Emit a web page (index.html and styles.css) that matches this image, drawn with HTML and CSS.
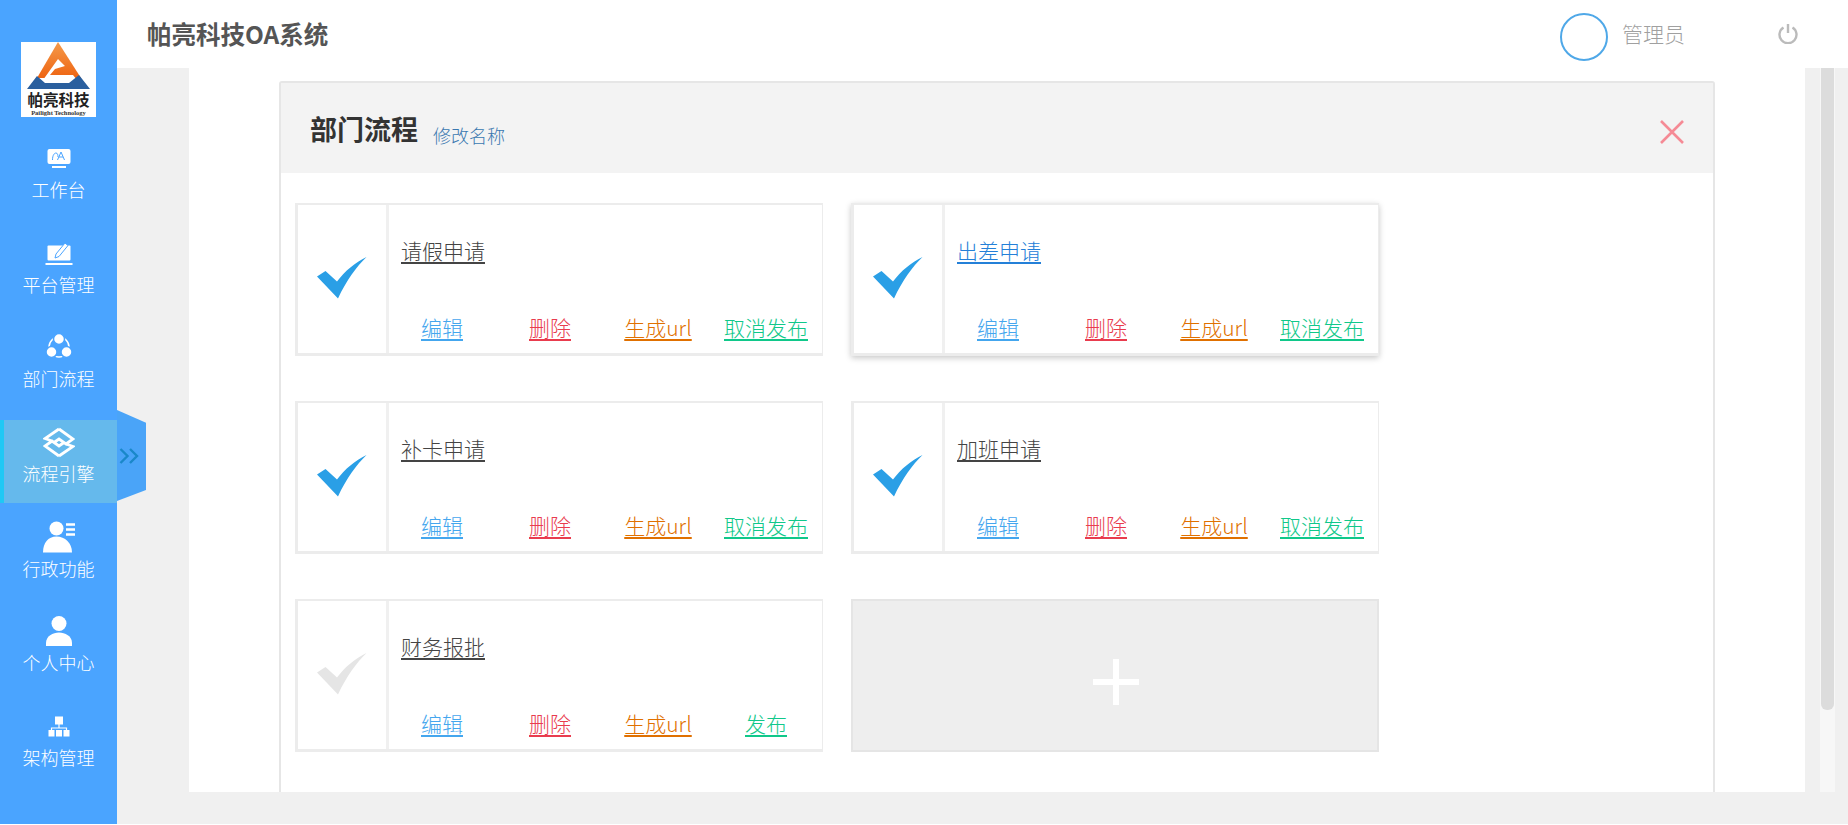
FILE: index.html
```html
<!DOCTYPE html>
<html lang="zh-CN">
<head>
  <meta charset="UTF-8">
  <title>帕亮科技OA系统</title>
  <link rel="stylesheet" href="styles.css">
</head>
<body>
  <svg class="svgDefs" xmlns="http://www.w3.org/2000/svg">
    <defs>
      <symbol id="tick" viewBox="0 0 50 42">
        <path d="M0 19.5 8.5 14 20 24.5C28 14 38 5.5 49.5 0 40 9 29 24 21 41.5Z"/>
      </symbol>
      <linearGradient id="logoOrange" x1="0" y1="0" x2="0" y2="1">
        <stop offset="0" stop-color="#f59a4a"/>
        <stop offset="1" stop-color="#ee6412"/>
      </linearGradient>
    </defs>
  </svg>

  <div class="app">
    <aside class="side">
      <div class="logo">
        <svg class="logoMark" viewBox="0 0 75 48">
          <path fill="url(#logoOrange)" d="M37 0 60 36H16Z"/>
          <path fill="#fff" d="M22 38 37 17 44 24 34 27 29 33H52L56 38Z"/>
          <path fill="#2a5f9e" d="M6 47 16 34 24 41H48L58 33 69 47Z"/>
        </svg>
        <div class="logoName">帕亮科技</div>
        <div class="logoSub">Pailight Technology</div>
      </div>
      <nav class="nav">
        <a class="navItem">
          <svg class="navIcon" viewBox="0 0 32 32">
            <rect x="4.5" y="7" width="23" height="15" rx="2" fill="#fff"/>
            <rect x="9" y="24" width="14" height="2" fill="#fff"/>
            <path d="M9.5 18c0-5 2-7 3.500-7s2 2 2 4M14.500 18 18 10l3.500 8M16 15h4" fill="none" stroke="#4aa4ff" stroke-width="1"/>
          </svg>
          <span>工作台</span>
        </a>
        <a class="navItem">
          <svg class="navIcon" viewBox="0 0 32 32">
            <rect x="4.500" y="8.500" width="23" height="15" rx="1" fill="#fff"/>
            <rect x="2.500" y="26" width="27" height="2" fill="#fff"/>
            <path d="M12 21l1-4 9-11 3 2.500-9 11z" fill="#fff" stroke="#4aa4ff" stroke-width="1"/>
          </svg>
          <span>平台管理</span>
        </a>
        <a class="navItem">
          <svg class="navIcon" viewBox="0 0 32 32">
            <circle cx="16" cy="16" r="10" fill="none" stroke="#fff" stroke-width="1.500"/>
            <g fill="#fff" stroke="#4aa4ff" stroke-width="1.500">
              <circle cx="16" cy="8" r="5.500"/>
              <circle cx="8.500" cy="21" r="5.500"/>
              <circle cx="23.500" cy="21" r="5.500"/>
            </g>
          </svg>
          <span>部门流程</span>
        </a>
        <a class="navItem isActive">
          <svg class="navIcon" viewBox="0 0 32 32">
            <path d="M16 3 30 13 23 18 16 13 11 16.500M16 30 2 20 9 15 16 20 21 16.500M9 15 2 12.500 16 3M23 18 30 20.500 16 30" fill="none" stroke="#fff" stroke-width="2.800"/>
          </svg>
          <span>流程引擎</span>
        </a>
        <a class="navItem">
          <svg class="navIcon" viewBox="0 0 32 32">
            <circle cx="13.500" cy="7.500" r="7" fill="#fff"/>
            <path d="M0 31.500C0 22 5 15.500 13.500 15.500S29 22 29 31.500Z" fill="#fff"/>
            <path d="M23 3.500h9M23 8.500h9M23 13.500h9" stroke="#fff" stroke-width="2.500"/>
          </svg>
          <span>行政功能</span>
        </a>
        <a class="navItem">
          <svg class="navIcon" viewBox="0 0 32 32">
            <circle cx="16" cy="8.500" r="7.500" fill="#fff"/>
            <path d="M3 31v-3C3 21 10 17.500 16 17.500S29 21 29 28v3Z" fill="#fff"/>
          </svg>
          <span>个人中心</span>
        </a>
        <a class="navItem">
          <svg class="navIcon" viewBox="0 0 32 32">
            <rect x="12" y="6.500" width="8" height="8" fill="#fff"/>
            <path d="M16 14v4M8.500 20v-2h15v2" fill="none" stroke="#fff" stroke-width="1.200"/>
            <rect x="5.500" y="20" width="6" height="6.500" fill="#fff"/>
            <rect x="13" y="20" width="6" height="6.500" fill="#fff"/>
            <rect x="20.500" y="20" width="6" height="6.500" fill="#fff"/>
          </svg>
          <span>架构管理</span>
        </a>
      </nav>
      <div class="sideTab">
        <svg class="sideTabArrows" viewBox="0 0 20 16">
          <path d="M1.500 1 8.500 8 1.500 15M11 1 18 8 11 15" fill="none" stroke="#1a88c9" stroke-width="2.400"/>
        </svg>
      </div>
    </aside>

    <div class="main">
      <header class="topBar">
        <div class="sysTitle">帕亮科技OA系统</div>
        <div class="userBox">
          <div class="avatar"></div>
          <div class="userName">管理员</div>
          <svg class="powerIcon" viewBox="0 0 20 21">
            <path d="M5.500 4.500a8.500 8.500 0 1 0 9 0M10 1v9" fill="none" stroke="#bbb" stroke-width="2.400"/>
          </svg>
        </div>
      </header>

      <div class="pageBody">
        <div class="content">
          <section class="panel">
            <div class="panelHead">
              <h2 class="panelTitle">部门流程</h2>
              <a class="renameLink">修改名称</a>
              <svg class="closeIcon" viewBox="0 0 24 24">
                <path d="M1 1 23 23M23 1 1 23" stroke="#f58a95" stroke-width="2.600"/>
              </svg>
            </div>
            <div class="flowGrid">
              <div class="flowCard">
                <div class="flowState"><svg class="tick"><use href="#tick"/></svg></div>
                <div class="flowMain">
                  <a class="flowName">请假申请</a>
                  <div class="flowActions">
                    <a class="actEdit">编辑</a><a class="actDel">删除</a><a class="actUrl">生成url</a><a class="actPub">取消发布</a>
                  </div>
                </div>
              </div>
              <div class="flowCard isHover">
                <div class="flowState"><svg class="tick"><use href="#tick"/></svg></div>
                <div class="flowMain">
                  <a class="flowName">出差申请</a>
                  <div class="flowActions">
                    <a class="actEdit">编辑</a><a class="actDel">删除</a><a class="actUrl">生成url</a><a class="actPub">取消发布</a>
                  </div>
                </div>
              </div>
              <div class="flowCard">
                <div class="flowState"><svg class="tick"><use href="#tick"/></svg></div>
                <div class="flowMain">
                  <a class="flowName">补卡申请</a>
                  <div class="flowActions">
                    <a class="actEdit">编辑</a><a class="actDel">删除</a><a class="actUrl">生成url</a><a class="actPub">取消发布</a>
                  </div>
                </div>
              </div>
              <div class="flowCard">
                <div class="flowState"><svg class="tick"><use href="#tick"/></svg></div>
                <div class="flowMain">
                  <a class="flowName">加班申请</a>
                  <div class="flowActions">
                    <a class="actEdit">编辑</a><a class="actDel">删除</a><a class="actUrl">生成url</a><a class="actPub">取消发布</a>
                  </div>
                </div>
              </div>
              <div class="flowCard">
                <div class="flowState"><svg class="tick isOff"><use href="#tick"/></svg></div>
                <div class="flowMain">
                  <a class="flowName">财务报批</a>
                  <div class="flowActions">
                    <a class="actEdit">编辑</a><a class="actDel">删除</a><a class="actUrl">生成url</a><a class="actPub">发布</a>
                  </div>
                </div>
              </div>
              <div class="addCard"></div>
            </div>
          </section>
        </div>
        <div class="scrollTrack"><div class="scrollThumb"></div></div>
      </div>
    </div>
  </div>
</body>
</html>
```

FILE: styles.css
```css
html, body{margin: 0; height: 100%; overflow: hidden; background: #fff;}
body{font-family: "Noto Sans CJK SC", "Open Sans", sans-serif; color: #444;}
a{cursor: pointer;}
.svgDefs{position: absolute; width: 0; height: 0;}

.app{display: flex; height: 824px;}

/* sidebar */
.side{position: relative; z-index: 2; flex: none; width: 117px; padding-top: 42px; box-sizing: border-box; background: #4aa4ff;}
.logo{width: 75px; height: 75px; margin: 0 auto; background: #fff; text-align: center; overflow: hidden;}
.logoMark{display: block; width: 75px; height: 48px;}
.logoName{font-size: 15.5px; line-height: 19px; font-weight: 700; color: #222;}
.logoSub{font-family: "Liberation Serif", serif; font-size: 6.5px; line-height: 8px; font-weight: 700; color: #333; white-space: nowrap;}

.nav{display: flex; flex-direction: column; gap: 11.67px; margin-top: 19px;}
.navItem{display: flex; flex-direction: column; align-items: center; height: 83px; padding-top: 6px; box-sizing: border-box; color: #fff; font-size: 18px; line-height: 24px; font-weight: 300;}
.navIcon{flex: none; width: 32px; height: 32px; margin-bottom: 3px;}
.navItem.isActive{background: #65b9ec; box-shadow: inset 4px 0 0 #1fc8f5;}

.sideTab{position: absolute; left: 117px; top: 410px; width: 29px; height: 91px; background: #4aa4f8; clip-path: polygon(0 0, 100% 14%, 100% 88%, 0 100%);}
.sideTabArrows{position: absolute; left: 2px; top: 38px; width: 20px; height: 16px;}

/* top bar */
.main{flex: 1; min-width: 0; display: flex; flex-direction: column;}
.topBar{flex: none; height: 68px; display: flex; align-items: center; justify-content: space-between; padding: 0 50px 0 30px; background: #fff;}
.sysTitle{font-size: 24.5px; font-weight: 700; color: #555; line-height: 34px;}
.userBox{display: flex; align-items: center;}
.avatar{width: 44px; height: 44px; border: 2px solid #4fa8e8; border-radius: 50%; margin: 6px 0 0 2px;}
.userName{margin-left: 14px; font-size: 21px; line-height: 30px; font-weight: 300; color: #a0a0a0; margin-top: -2px;}
.powerIcon{width: 20px; height: 21px; margin-left: 93px; margin-top: -1px;}

/* page */
.pageBody{position: relative; flex: 1; min-height: 0; display: flex; padding: 0 43px 32px 72px; background: #f0f0f0;}
.content{flex: 1; min-width: 0; padding: 13px 0 0 90px; background: #fff; overflow: hidden;}
.panel{width: 1436px; box-sizing: border-box; height: 900px; border: 2px solid #e6e6e6; border-radius: 3px;}
.panelHead{display: flex; align-items: flex-end; height: 90px; box-sizing: border-box; padding: 0 29px 24px 29px; background: #f3f3f3;}
.panelTitle{margin: 0; font-size: 27px; line-height: 40px; font-weight: 700; color: #333;}
.renameLink{margin-left: 15px; font-size: 18px; line-height: 30px; color: #3a78b0; font-weight: 300; margin-bottom: -1px;}
.closeIcon{width: 24px; height: 24px; margin: 0 0 5px auto;}

.flowGrid{display: grid; grid-template-columns: 528px 528px; column-gap: 28px; row-gap: 45px; padding: 30px 14px 0;}
.flowCard{display: flex; height: 153px; box-sizing: border-box; border: 2px solid #ececec; border-left-width: 3px; border-right-width: 1px; border-bottom-width: 3px; background: #fff;}
.flowCard.isHover{box-shadow: 0 2px 6px rgba(0,0,0,0.22);}
.flowState{flex: none; display: flex; align-items: center; justify-content: center; width: 91px; box-sizing: border-box; border-right: 3px solid #f0f0f0;}
.tick{width: 50px; height: 42px; margin: -2px 0 0 0; fill: #2a9fe6;}
.tick.isOff{fill: #e5e5e5;}

.flowMain{flex: 1; min-width: 0; display: flex; flex-direction: column; align-items: flex-start; padding: 30px 0 11px 12px;}
.flowName{font-size: 21px; line-height: 30px; color: #444; font-weight: 300; text-decoration: underline; text-decoration-thickness: 2px; text-underline-offset: 3px;}
.isHover .flowName{color: #2480d8;}
.flowActions{display: grid; grid-template-columns: repeat(4, 108px); margin: auto 0 0 -13px; font-size: 21px; line-height: 30px; font-weight: 300; text-align: center;}
.flowActions a{text-decoration: underline; text-decoration-thickness: 2px; text-underline-offset: 3px;}
.actEdit{color: #44a6ee;}
.actDel{color: #e93c4e;}
.actUrl{color: #e07000;}
.actPub{color: #10c88a;}

.addCard{position: relative; height: 153px; box-sizing: border-box; border: 2px solid #e5e5e5; background: #eee;}
.addCard:before, .addCard:after{content: ""; position: absolute; background: #fff;}
.addCard:before{left: 240px; top: 78px; width: 46px; height: 6px;}
.addCard:after{left: 260px; top: 58px; width: 6px; height: 46px;}

.scrollTrack{position: absolute; right: 13px; top: 0; bottom: 32px; width: 15px; background: #f7f7f7;}
.scrollThumb{width: 13px; height: 642px; margin: 0 auto; background: #dcdcdc; border-radius: 0 0 6px 6px;}
```
